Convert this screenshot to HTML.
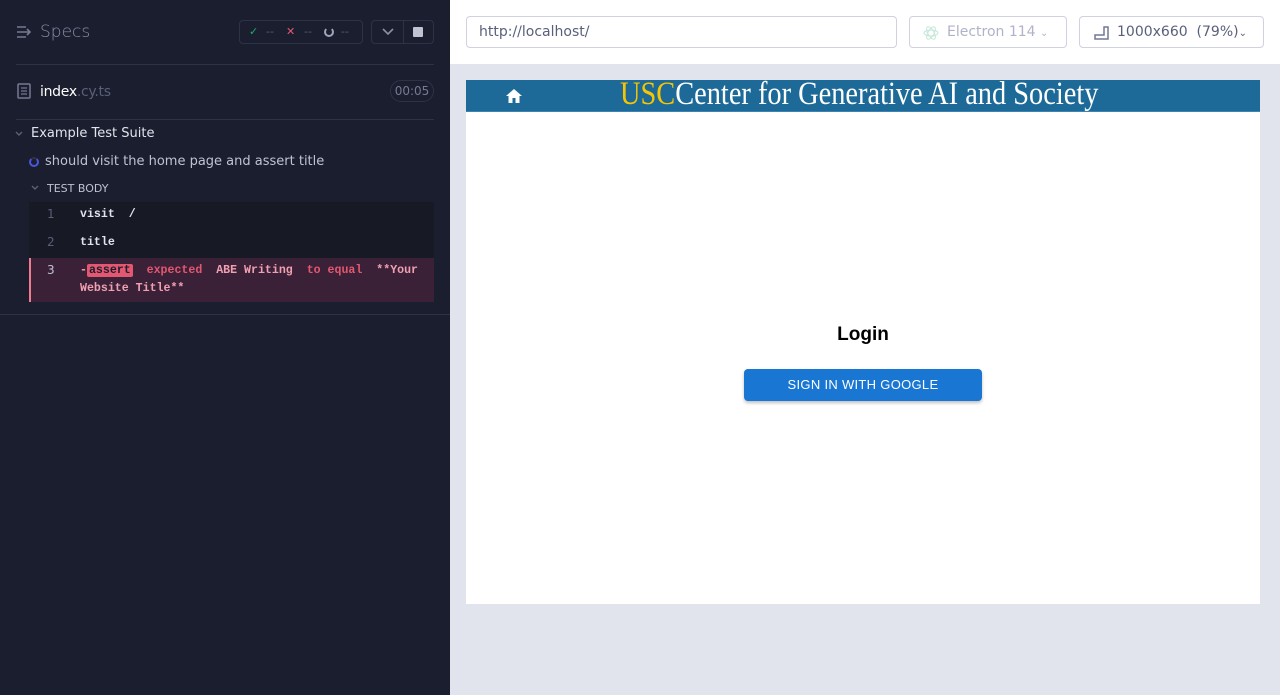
<!DOCTYPE html>
<html><head><meta charset="utf-8"><style>
*{box-sizing:border-box;margin:0;padding:0}
body{width:1280px;height:695px;overflow:hidden;font-family:"DejaVu Sans","Liberation Sans",sans-serif;background:#e1e3ed;position:relative}
.left{position:absolute;left:0;top:0;width:450px;height:695px;background:#1b1e2e;color:#d0d2e0}
.abs{position:absolute}
.mono{font-family:"Liberation Mono","DejaVu Sans Mono",monospace;font-weight:bold;font-size:11.6px}
.box{position:absolute;background:#fff;border:1px solid #d0d2e0;border-radius:4px;height:32px;top:16px;font-size:14px;line-height:31px}
</style></head><body>
<div class="left">
  <svg class="abs" style="left:16px;top:25px" width="16" height="14" viewBox="0 0 16 14"><path d="M1 2h9M1 7h12M1 12h9M11 4l3 3-3 3" stroke="#747994" stroke-width="1.6" fill="none"/></svg>
  <div class="abs" style="left:40px;top:22px;font-size:17px;color:#8a8fa8;font-weight:300">Specs</div>
  <div class="abs" style="left:239px;top:20px;width:124px;height:24px;border:1px solid #2e3247;border-radius:4px;font-size:11px;line-height:22px;color:#5a5f7a">
    <span style="position:absolute;left:9px;color:#1fa971;font-weight:bold">✓</span><span style="position:absolute;left:26px">--</span>
    <span style="position:absolute;left:46px;color:#e45770;font-weight:bold">✕</span><span style="position:absolute;left:64px">--</span>
    <span style="position:absolute;left:84px;top:6px;width:10px;height:10px;border:2px solid #a0a4ba;border-radius:50%;border-top-color:transparent"></span><span style="position:absolute;left:101px">--</span>
  </div>
  <div class="abs" style="left:371px;top:20px;width:63px;height:24px;border:1px solid #2e3247;border-radius:4px">
    <div class="abs" style="left:31px;top:0;width:1px;height:22px;background:#2e3247"></div>
    <svg class="abs" style="left:10px;top:7px" width="12" height="8"><path d="M1 1l5 5 5-5" stroke="#8a8fa8" stroke-width="1.6" fill="none"/></svg>
    <div class="abs" style="left:41px;top:6px;width:10px;height:10px;background:#c0c3d2;border-radius:1px"></div>
  </div>
  <div class="abs" style="left:16px;top:64px;width:418px;height:1px;background:#2e3247"></div>
  <svg class="abs" style="left:17px;top:83px" width="14" height="16"><rect x="1" y="1" width="12" height="14" rx="1" fill="none" stroke="#747994" stroke-width="1.5"/><path d="M4 5h6M4 8h6M4 11h6" stroke="#747994" stroke-width="1.3"/></svg>
  <div class="abs" style="left:40px;top:84px;font-size:14px;color:#fff;letter-spacing:-0.3px">index<span style="color:#5a5f7a">.cy.ts</span></div>
  <div class="abs" style="left:390px;top:80px;width:44px;height:22px;border:1px solid #2e3247;border-radius:11px;font-size:12px;line-height:21px;text-align:center;color:#747994">00:05</div>
  <div class="abs" style="left:16px;top:119px;width:418px;height:1px;background:#2e3247"></div>
  <svg class="abs" style="left:15px;top:131px" width="8" height="6"><path d="M1 1l3 3 3-3" stroke="#5a5f7a" stroke-width="1.4" fill="none"/></svg>
  <div class="abs" style="left:31px;top:126px;font-size:13px;color:#e1e3ed">Example Test Suite</div>
  <div class="abs" style="left:29px;top:157px;width:10px;height:10px;border:2px solid #4956e3;border-radius:50%;border-top-color:#2e3247"></div>
  <div class="abs" style="left:45px;top:154px;font-size:13px;color:#bfc2d4">should visit the home page and assert title</div>
  <svg class="abs" style="left:31px;top:185px" width="8" height="6"><path d="M1 1l3 3 3-3" stroke="#5a5f7a" stroke-width="1.4" fill="none"/></svg>
  <div class="abs" style="left:47px;top:182px;font-size:11px;color:#bfc2d4">TEST BODY</div>
  <div class="abs" style="left:29px;top:202px;width:405px;height:56px;background:#171924"></div>
  <div class="abs" style="left:47px;top:207px;font-size:12px;color:#5a5f7a">1</div>
  <div class="abs mono" style="left:80px;top:208px;color:#e1e3ed">visit&nbsp; /</div>
  <div class="abs" style="left:47px;top:235px;font-size:12px;color:#5a5f7a">2</div>
  <div class="abs mono" style="left:80px;top:236px;color:#e1e3ed">title</div>
  <div class="abs" style="left:29px;top:258px;width:405px;height:44px;background:#3b2138;border-left:2px solid #f07b8f"></div>
  <div class="abs" style="left:47px;top:263px;font-size:12px;color:#bfc2d4">3</div>
  <div class="abs mono" style="left:80px;top:262px;width:350px;line-height:18px;color:#f0a0b0">-<span style="background:#e45770;color:#1b1e2e;border-radius:2px;padding:0 2px">assert</span>&nbsp; <span style="color:#e45770">expected</span>&nbsp; ABE Writing&nbsp; <span style="color:#e45770">to equal</span>&nbsp; **Your Website Title**</div>
  <div class="abs" style="left:0;top:314px;width:450px;height:1px;background:#2e3247"></div>
</div>
<div class="abs" style="left:450px;top:0;width:830px;height:64px;background:#fff"></div>
<div class="box" style="left:466px;width:431px;padding-left:12px;color:#5a5f7a">http://localhost/</div>
<div class="box" style="left:909px;width:158px;padding-left:37px;color:#afb3c7">Electron 114 <span style="font-size:10px">⌄</span>
  <svg class="abs" style="left:13px;top:8px" width="16" height="16"><ellipse cx="8" cy="8" rx="7" ry="3" fill="none" stroke="#c5e8d8" stroke-width="1" transform="rotate(60 8 8)"/><ellipse cx="8" cy="8" rx="7" ry="3" fill="none" stroke="#c5e8d8" stroke-width="1" transform="rotate(-60 8 8)"/><ellipse cx="8" cy="8" rx="7" ry="3" fill="none" stroke="#c5e8d8" stroke-width="1"/></svg></div>
<div class="box" style="left:1079px;width:185px;padding-left:37px;color:#5a5f7a">1000x660&nbsp; (79%)<span style="font-size:10px">⌄</span>
  <svg class="abs" style="left:13px;top:8px" width="16" height="16"><path d="M2 14h13V2h-4v8H2z" fill="none" stroke="#747994" stroke-width="1.5"/></svg></div>
<div class="abs" style="left:466px;top:80px;width:794px;height:524px;background:#fff">
  <div class="abs" style="left:0;top:0;width:794px;height:32px;background:#1d6a99;border-bottom:1px solid #3a85b5;overflow:hidden">
    <svg class="abs" style="left:39px;top:8px" width="18" height="16"><path d="M9 1L1 8h2.5v7h4v-5h3v5h4V8H17z" fill="#fff"/></svg>
    <div class="abs" style="left:154px;top:-4px;font-family:'Liberation Serif',serif;font-size:33px;color:#fff;white-space:nowrap;transform:scaleX(0.86);transform-origin:left"><span style="color:#f7c600">USC</span>Center for Generative AI and Society</div>
  </div>
  <div class="abs" style="left:0;top:244px;width:794px;text-align:center;font-family:'Liberation Sans',sans-serif;font-weight:bold;font-size:19px;color:#000">Login</div>
  <div class="abs" style="left:278px;top:289px;width:238px;height:32px;background:#1976d2;border-radius:4px;box-shadow:0 2px 3px rgba(0,0,0,.25);color:#fff;font-family:'Liberation Sans',sans-serif;font-size:13px;line-height:32px;text-align:center;letter-spacing:.3px">SIGN IN WITH GOOGLE</div>
</div>
</body></html>
